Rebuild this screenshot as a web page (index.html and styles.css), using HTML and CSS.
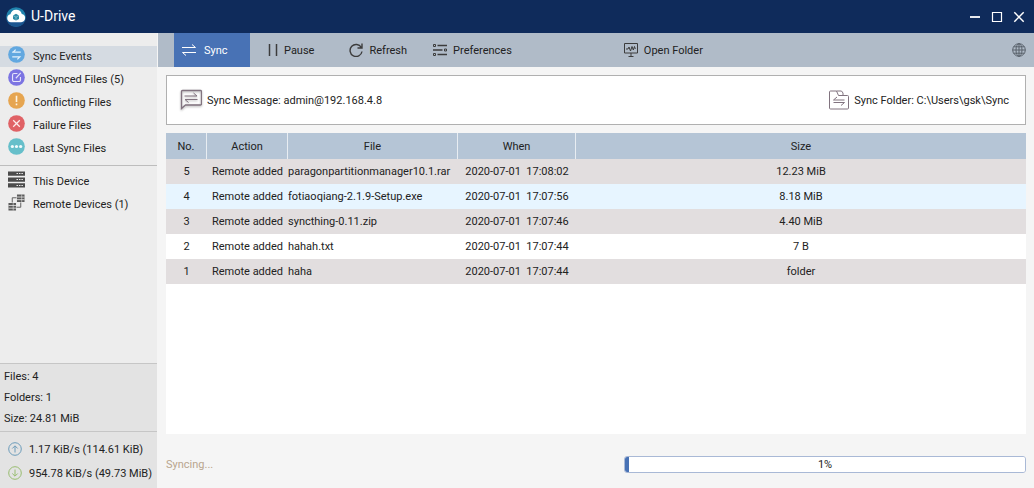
FILE: index.html
```html
<!DOCTYPE html>
<html lang="en">
<head>
    <meta charset="UTF-8">
    <meta name="viewport" content="width=device-width, initial-scale=1.0">
    <title>U-Drive</title>
    <link rel="stylesheet" href="styles.css">
</head>
<body>
    <!-- Title bar -->
    <header class="titlebar">
        <svg class="logo" viewBox="0 0 20 20" aria-hidden="true">
            <circle cx="10" cy="10" r="9.8" fill="#1f82ad"/>
            <path d="M.7 13a9.800 9.800 0 0 0 18.600 0z" fill="#1a5590"/>
            <path d="M5 15.200a4 4 0 0 1-.6-7.900 5.900 5.900 0 0 1 11.400-.4 4.200 4.200 0 0 1-.6 8.300z" fill="#fff"/>
            <path d="M10 6.800l3 1.700v3.400l-3 1.700-3-1.700V8.500z" fill="#2a8aa6"/>
            <path d="M7 8.500l3 1.700 3-1.700M10 10.200v3.400" fill="none" stroke="#bfe2ea" stroke-width=".5"/>
        </svg>
        <h1>U-Drive</h1>
        <div class="window-buttons">
            <button type="button" aria-label="Minimize">
                <svg viewBox="0 0 12 12"><path d="M1 6h10" stroke-width="1.8"/></svg>
            </button>
            <button type="button" aria-label="Maximize">
                <svg viewBox="0 0 12 12"><path d="M1.500 1.500h9v9h-9z" stroke-width="1.200"/></svg>
            </button>
            <button type="button" aria-label="Close">
                <svg viewBox="0 0 12 12"><path d="M1.300 1.300l9.400 9.400M10.700 1.300l-9.400 9.400" stroke-width="1.500"/></svg>
            </button>
        </div>
    </header>

    <div class="window">
        <!-- Left side -->
        <aside class="sidebar">
            <nav class="events">
                <a href="#sync" class="active">
                    <svg viewBox="0 0 18 18"><circle cx="9" cy="9" r="8.800" fill="#62a8e0"/><path d="M13.500 6.500h-8l2.600-2.600M4.500 6.500h2M4.500 11.500h8l-2.600 2.600" fill="none" stroke="#e4f1fb" stroke-width="1.300"/></svg>
                    <span>Sync Events</span>
                </a>
                <a href="#unsynced">
                    <svg viewBox="0 0 18 18"><circle cx="9" cy="9" r="8.800" fill="#7c74e2"/><path d="M10 4.800H6.300a1.500 1.500 0 0 0-1.500 1.500v5.400a1.500 1.500 0 0 0 1.500 1.500h5.400a1.500 1.500 0 0 0 1.500-1.500V8.500M8.300 9.800l5.200-5.600" fill="none" stroke="#e6e4fb" stroke-width="1.200"/></svg>
                    <span>UnSynced Files (5)</span>
                </a>
                <a href="#conflicting">
                    <svg viewBox="0 0 18 18"><circle cx="9" cy="9" r="8.800" fill="#e6a550"/><path d="M9 4v6.500M9 12.300v1.700" stroke="#fdf3e2" stroke-width="1.700"/></svg>
                    <span>Conflicting Files</span>
                </a>
                <a href="#failure">
                    <svg viewBox="0 0 18 18"><circle cx="9" cy="9" r="8.800" fill="#e06266"/><path d="M5.500 5.500l7 7M12.500 5.500l-7 7" stroke="#fdecec" stroke-width="1.300"/></svg>
                    <span>Failure Files</span>
                </a>
                <a href="#last">
                    <svg viewBox="0 0 18 18"><circle cx="9" cy="9" r="8.800" fill="#66bfca"/><g fill="#f2fbfc"><circle cx="4.600" cy="9" r="1.700"/><circle cx="9" cy="9" r="1.700"/><circle cx="13.400" cy="9" r="1.700"/></g></svg>
                    <span>Last Sync Files</span>
                </a>
            </nav>
            <nav class="devices">
                <a href="#device">
                    <svg viewBox="0 0 18 18"><path d="M0 .5h18V5H0zM0 6.800h18v4.500H0zM0 13.100h18v4.500H0z" fill="#4b4b4b"/><path d="M9 2.700h7M9 9h7M9 15.300h7" stroke="#e8e8e8" stroke-width="1.200" stroke-dasharray="1.600 1"/></svg>
                    <span>This Device</span>
                </a>
                <a href="#remote">
                    <svg viewBox="0 0 18 18"><path d="M9.500.500h8v8h-8zM.5 9.500h8v8h-8z" fill="#5a5a5a"/><path d="M9.500 3.200h8M9.500 6h8M.5 12.200h8M.5 15h8" stroke="#ededed" stroke-width=".8"/><path d="M14.500.500v8M5.500 9.500v8" stroke="#ededed" stroke-width=".6"/><path d="M9 4H4.500v5M9 14h4.500V9" fill="none" stroke="#5a5a5a" stroke-width="1"/></svg>
                    <span>Remote Devices (1)</span>
                </a>
            </nav>
            <div class="totals">
                <p>Files: 4</p>
                <p>Folders: 1</p>
                <p>Size: 24.81 MiB</p>
            </div>
            <div class="rates">
                <p>
                    <svg viewBox="0 0 14 14" stroke="#6c9cba"><circle cx="7" cy="7" r="6.300"/><path d="M7 10.500V4M4.300 6.500L7 3.800l2.700 2.700"/></svg>
                    1.17 KiB/s (114.61 KiB)
                </p>
                <p>
                    <svg viewBox="0 0 14 14" stroke="#98bd70"><circle cx="7" cy="7" r="6.300"/><path d="M7 3.500V10M4.300 7.500L7 10.200l2.700-2.700"/></svg>
                    954.78 KiB/s (49.73 MiB)
                </p>
            </div>
        </aside>

        <main class="main">
            <!-- Toolbar -->
            <div class="toolbar">
                <button type="button" class="sync">
                    <svg viewBox="0 0 14 14"><path d="M0 4.500h13.500L10 1.500M14 9.500H.5L4 12.500"/></svg>
                    Sync
                </button>
                <button type="button" class="pause">
                    <svg viewBox="0 0 10 14"><path d="M1.500 1v12M8.500 1v12" stroke-width="1.500"/></svg>
                    Pause
                </button>
                <button type="button" class="refresh">
                    <svg viewBox="0 0 14 14"><path d="M12.300 4.500A6 6 0 1 0 13 8.500M13 .500v4.500H8.500" stroke-width="1.400"/></svg>
                    Refresh
                </button>
                <button type="button" class="preferences">
                    <svg viewBox="0 0 14 14"><path d="M4.500 2.500H14M0 7h9.500M4.500 11.500H14" stroke-width="1.300"/><path d="M.5 1.500h2v2h-2zM11.500 6h2v2h-2zM.5 10.500h2v2h-2z" stroke-width="1"/></svg>
                    Preferences
                </button>
                <button type="button" class="open-folder">
                    <svg viewBox="0 0 14 14"><path d="M.5.500h13v9.500H.5zM7 10v3M4.500 13.500h5"/><path d="M2 6h2l1-2 1.500 4L8 3.500 9.300 7l1.200-3.500.8 2.500"/></svg>
                    Open Folder
                </button>
                <button type="button" class="language" aria-label="Language">
                    <svg viewBox="0 0 14 14"><circle cx="7" cy="7" r="6.300"/><ellipse cx="7" cy="7" rx="3" ry="6.300"/><path d="M7 .700v12.600M.700 7h12.600M1.600 3.800h10.800M1.600 10.200h10.800"/></svg>
                </button>
            </div>

            <div class="content">
                <div class="info">
                    <p>
                        <svg class="message-icon" viewBox="0 0 22 22"><path d="M2.500 1.500h18a1 1 0 0 1 1 1v12.500a1 1 0 0 1-1 1H5.500L1.500 19.500v-17a1 1 0 0 1 1-1z" stroke-width="1.300"/><path d="M4.500 7h12.500L13.500 4M17.500 10.500H5L8.500 13.500"/></svg>
                        Sync Message: admin@192.168.4.8
                    </p>
                    <p>
                        <svg viewBox="0 0 20 20"><path d="M1.500 19h17a1 1 0 0 0 1-1V6.500a1 1 0 0 0-1-1H9.500L7.500 1h-6a1 1 0 0 0-1 1v16a1 1 0 0 0 1 1zM7.500 1h5l1.500 2v2.500"/><path d="M15.500 10H4.500L8 7M4.500 12.500h11L12 15.500"/></svg>
                        Sync Folder: C:\Users\gsk\Sync
                    </p>
                </div>

                <div class="table-box">
                    <table>
                        <colgroup>
                            <col class="col-no">
                            <col class="col-action">
                            <col class="col-file">
                            <col class="col-when">
                            <col>
                        </colgroup>
                        <thead>
                            <tr><th>No.</th><th>Action</th><th>File</th><th>When</th><th>Size</th></tr>
                        </thead>
                        <tbody>
                            <tr><td>5</td><td>Remote added</td><td class="file">paragonpartitionmanager10.1.rar</td><td>2020-07-01 &nbsp;17:08:02</td><td>12.23 MiB</td></tr>
                            <tr class="selected"><td>4</td><td>Remote added</td><td class="file">fotiaoqiang-2.1.9-Setup.exe</td><td>2020-07-01 &nbsp;17:07:56</td><td>8.18 MiB</td></tr>
                            <tr><td>3</td><td>Remote added</td><td class="file">syncthing-0.11.zip</td><td>2020-07-01 &nbsp;17:07:46</td><td>4.40 MiB</td></tr>
                            <tr><td>2</td><td>Remote added</td><td class="file">hahah.txt</td><td>2020-07-01 &nbsp;17:07:44</td><td>7 B</td></tr>
                            <tr><td>1</td><td>Remote added</td><td class="file">haha</td><td>2020-07-01 &nbsp;17:07:44</td><td>folder</td></tr>
                        </tbody>
                    </table>
                </div>

                <!-- Sync progress -->
                <div class="status">
                    <label for="sync-progress">Syncing...</label>
                    <div class="progress-box">
                        <progress id="sync-progress" value="1" max="100"></progress>
                        <span>1%</span>
                    </div>
                </div>
            </div>
        </main>
    </div>
</body>
</html>
```

FILE: styles.css
```css
* {
    box-sizing: border-box;
}
body {
    margin: 0;
    height: 100vh;
    display: flex;
    flex-direction: column;
    font-family: Roboto, "Noto Sans", sans-serif;
    font-size: 11px;
    line-height: 17px;
    color: #222;
    background-color: #f5f5f5;
}
p {
    margin: 0;
}
svg {
    display: block;
    flex: none;
}
button {
    font: inherit;
    color: inherit;
    border: none;
    padding: 0;
    background: none;
    cursor: pointer;
}

/* Title bar */
.titlebar {
    display: flex;
    align-items: center;
    height: 33px;
    flex: none;
    padding: 0 8px 0 6px;
    background-color: #0f2b5b;
    color: #fff;
}
.logo {
    width: 20px;
    height: 20px;
}
.titlebar h1 {
    margin: 0 0 0 5px;
    font-size: 14px;
    font-weight: normal;
}
.window-buttons {
    display: flex;
    gap: 8px;
    margin-left: auto;
}
.window-buttons svg {
    width: 14px;
    height: 12px;
    fill: none;
    stroke: #fff;
}

.window {
    display: flex;
    flex: 1;
    min-height: 0;
}

/* Sidebar */
.sidebar {
    display: flex;
    flex-direction: column;
    flex: none;
    width: 158px;
    background-color: #ededed;
    border-right: 1px solid #f5f5f5;
}
.sidebar nav a {
    display: flex;
    align-items: center;
    gap: 8px;
    height: 21px;
    padding-left: 8px;
    color: #222;
    text-decoration: none;
}
.sidebar nav svg {
    width: 17px;
    height: 17px;
    margin-bottom: 5px;
}
.sidebar nav a.active {
    background-color: #d5dbe2;
}
.events,
.devices {
    display: flex;
    flex-direction: column;
    gap: 2px;
}
.events {
    padding: 13px 0 6px;
    border-bottom: 1px solid #bdbdbd;
}
.devices {
    flex: 1;
    padding-top: 5px;
}
.totals,
.rates {
    background-color: #e3e3e3;
    border-top: 1px solid #c6c6c6;
}
.totals {
    padding: 2px 4px;
}
.totals p {
    line-height: 21px;
}
.rates {
    padding: 5px 0 3px 8px;
}
.rates p {
    display: flex;
    align-items: center;
    gap: 7px;
    height: 24px;
}
.rates svg {
    width: 14px;
    height: 14px;
    fill: none;
}

/* Main area */
.main {
    display: flex;
    flex-direction: column;
    flex: 1;
    min-width: 0;
}
.toolbar {
    display: flex;
    align-items: stretch;
    height: 34px;
    flex: none;
    padding: 0 8px 0 16px;
    background-color: #b0bbc8;
}
.toolbar button {
    display: flex;
    align-items: center;
    gap: 6px;
}
.toolbar svg {
    width: 14px;
    height: 14px;
    fill: none;
    stroke: #3c3c3c;
}
.toolbar .sync {
    gap: 8px;
    width: 76px;
    padding-left: 8px;
    background-color: #4872b5;
    color: #fff;
}
.toolbar .sync svg {
    stroke: #fff;
}
.toolbar .pause {
    margin-left: 18px;
}
.toolbar .pause svg {
    width: 10px;
}
.toolbar .refresh {
    margin-left: 35px;
}
.toolbar .preferences {
    margin-left: 26px;
}
.toolbar .open-folder {
    margin-left: 112px;
}
.toolbar .language {
    margin-left: auto;
}
.toolbar .language svg {
    stroke: #59616b;
}

.content {
    display: flex;
    flex-direction: column;
    flex: 1;
    min-height: 0;
    gap: 8px;
    padding: 8px 8px 15px;
}
.info {
    display: flex;
    align-items: center;
    justify-content: space-between;
    height: 50px;
    flex: none;
    padding: 0 16px 0 13px;
    background-color: #fff;
    border: 1px solid #b0b0b0;
}
.info p {
    display: flex;
    align-items: center;
    gap: 5px;
}
.info svg {
    width: 20px;
    height: 20px;
    fill: none;
    stroke: #81737f;
}
.info .message-icon {
    width: 22px;
    height: 22px;
    filter: drop-shadow(0 1px 1px #aaa);
}

/* Event table */
.table-box {
    flex: 1;
    min-height: 0;
    overflow: auto;
    background-color: #fff;
}
table {
    width: 100%;
    table-layout: fixed;
    border-collapse: separate;
    border-spacing: 0;
}
.col-no {
    width: 41px;
}
.col-action {
    width: 81px;
}
.col-file {
    width: 170px;
}
.col-when {
    width: 118px;
}
th {
    height: 26px;
    padding: 0;
    font-weight: normal;
    background-color: #b5c5d6;
    border-right: 1px solid #e8edf2;
}
th:last-child {
    border-right: none;
}
td {
    height: 25px;
    padding: 0;
    text-align: center;
    white-space: nowrap;
}
td.file {
    text-align: left;
}
tbody tr:nth-child(odd) {
    background-color: #e2dedf;
}
tbody tr.selected {
    background-color: #e7f5ff;
}

/* Progress */
.status {
    display: flex;
    align-items: center;
    justify-content: space-between;
    flex: none;
    padding-top: 14px;
    color: #b9a58e;
}
.progress-box {
    position: relative;
    width: 402px;
    height: 17px;
    color: #222;
}
progress {
    display: block;
    width: 100%;
    height: 100%;
    appearance: none;
    border: 1px solid #a9b9d6;
    border-radius: 3px;
    overflow: hidden;
}
progress::-webkit-progress-bar {
    background-color: #fff;
}
progress::-webkit-progress-value {
    background-color: #4872b5;
}
.progress-box span {
    position: absolute;
    inset: 0;
    text-align: center;
}
```
